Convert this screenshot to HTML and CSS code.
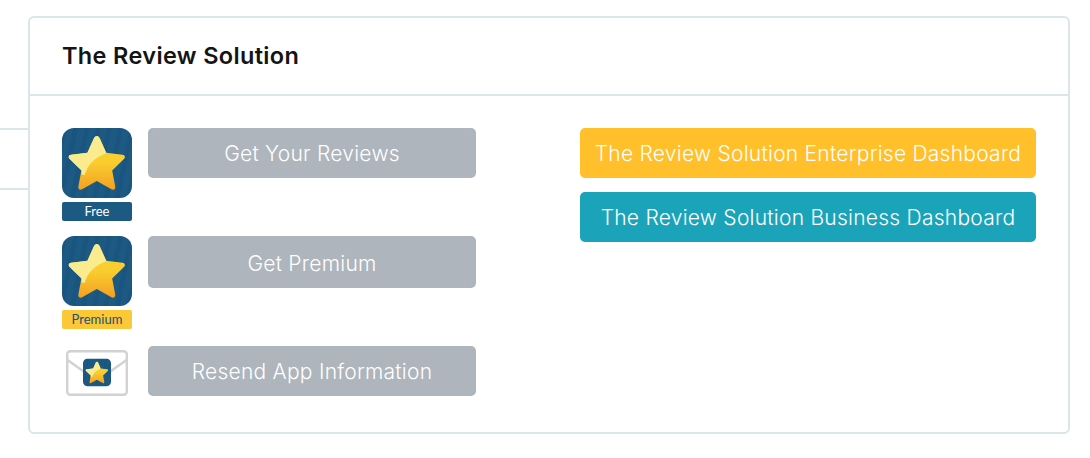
FILE: index.html
```html
<!DOCTYPE html>
<html lang="en">
<head>
<meta charset="utf-8">
<title>The Review Solution</title>
<link rel="stylesheet" href="styles.css">
</head>
<body>
<svg class="defs" width="0" height="0" aria-hidden="true">
  <defs>
    <linearGradient id="starFill" x1="0" y1="0" x2="0" y2="1">
      <stop offset="0" stop-color="#f9d233"/>
      <stop offset="0.5" stop-color="#f9cd2e"/>
      <stop offset="1" stop-color="#f3a024"/>
    </linearGradient>
    <pattern id="stripes" width="11" height="70" patternUnits="userSpaceOnUse" patternTransform="rotate(12)">
      <rect width="11" height="70" fill="#1c5a84"/>
      <rect width="5" height="70" fill="#1a5580"/>
    </pattern>
    <symbol id="appIcon" viewBox="0 0 70 70">
      <rect width="70" height="70" rx="12" fill="url(#stripes)"/>
      <path d="M34.800 8c1.400 0 2.300 1 3 2.400l6.400 14.400 16.300 2c2.500.3 3.200 2.600 1.400 4.300L50.200 42.600l3 15.800c.5 2.700-1.600 4-3.800 2.800L34.800 53l-14.600 8.200c-2.200 1.200-4.300-.1-3.800-2.800l3-15.800L7.700 31.100c-1.800-1.700-1.100-4 1.400-4.300l16.300-2 6.400-14.400c.7-1.400 1.600-2.400 3-2.400z" fill="url(#starFill)"/>
      <path d="M34.800 8c1.400 0 2.300 1 3 2.400l6.400 14.400.6.100C33 29 26 36 22.500 47l-3-.5.100-3.900L7.700 31.100c-1.800-1.700-1.100-4 1.400-4.300l16.300-2 6.400-14.400c.7-1.400 1.600-2.400 3-2.400z" fill="#faec8e"/>
    </symbol>
  </defs>
</svg>
<div class="page">
  <div class="stub"></div>
  <section class="card">
    <header class="card-head">
      <h2 class="card-title">The Review Solution</h2>
    </header>
    <div class="card-body">
      <div class="left-col">
        <div class="row row-free">
          <div class="app">
            <svg class="app-icon"><use href="#appIcon"/></svg>
            <span class="tag tag-free">Free</span>
          </div>
          <a class="btn btn-grey btn-50">Get Your Reviews</a>
        </div>
        <div class="row row-premium">
          <div class="app">
            <svg class="app-icon"><use href="#appIcon"/></svg>
            <span class="tag tag-premium">Premium</span>
          </div>
          <a class="btn btn-grey btn-52">Get Premium</a>
        </div>
        <div class="row">
          <div class="app app-mail">
            <svg class="mail" viewBox="0 0 62 46">
              <rect x="1.200" y="1.200" width="59.600" height="43.600" rx="3" fill="#fff" stroke="#d2d2d2" stroke-width="2.400"/>
              <path d="M1.500 10 L31 31 L60.500 10" fill="none" stroke="#d2d2d2" stroke-width="2.400"/>
              <svg x="17" y="8.500" width="28" height="28" viewBox="0 0 70 70"><use href="#appIcon" width="70" height="70"/></svg>
            </svg>
          </div>
          <a class="btn btn-grey btn-50">Resend App Information</a>
        </div>
      </div>
      <div class="right-col">
        <a class="btn btn-50 btn-amber">The Review Solution Enterprise Dashboard</a>
        <a class="btn btn-50 btn-teal">The Review Solution Business Dashboard</a>
      </div>
    </div>
  </section>
</div>
</body>
</html>
```
FILE: styles.css
```css
* { box-sizing: border-box; }
html, body { margin: 0; padding: 0; background: #fff; }
body { font-family: "Inter", "Liberation Sans", sans-serif; width: 1090px; height: 458px; overflow: hidden; }
.defs { display: block; height: 0; }
.page { display: flex; align-items: flex-start; padding-top: 16px; }
.stub {
  width: 28px;
  height: 62px;
  margin-top: 112px;
  border-top: 2px solid #dbe5ea;
  border-bottom: 2px solid #dbe5ea;
}
.card {
  width: 1042px;
  height: 418px;
  border: 2px solid #dbe5ea;
  border-radius: 6px;
}
.card-head {
  height: 78px;
  border-bottom: 2px solid #dbe5ea;
  display: flex;
  align-items: center;
  padding: 0 0 2px 32px;
}
.card-title {
  margin: 0;
  font-size: 23.500px;
  font-weight: 600;
  color: #141414;
  letter-spacing: 0.35px;
}
.card-body {
  display: flex;
  padding: 32px 32px 0 32px;
}
.left-col { width: 414px; display: flex; flex-direction: column; }
.right-col {
  width: 456px;
  margin-left: 104px;
  display: flex;
  flex-direction: column;
  gap: 14px;
}
.row { display: flex; align-items: flex-start; gap: 16px; }
.row-free { height: 108px; }
.row-premium { height: 110px; }
.app { width: 70px; display: flex; flex-direction: column; align-items: center; }
.app-icon { width: 70px; height: 70px; display: block; }
.tag {
  width: 70px;
  height: 19px;
  margin-top: 4px;
  border-radius: 2px;
  font-family: "Lato", "Liberation Sans", sans-serif;
  font-size: 13px;
  line-height: 19px;
  text-align: center;
}
.tag-free { background: #1c5a84; color: #fff; }
.tag-premium { background: #fbc838; color: #1c5078; }
.app-mail { padding-top: 4px; }
.mail { width: 62px; height: 46px; display: block; }
.btn {
  display: flex;
  align-items: center;
  justify-content: center;
  border-radius: 5px;
  color: #fff;
  font-size: 21px;
  font-weight: 300;
  letter-spacing: 0.25px;
}
.btn-50 { height: 50px; }
.btn-52 { height: 52px; padding-top: 2px; }
.btn-grey { width: 328px; background: #aeb5bc; }
.btn-amber { background: #ffc02b; }
.btn-teal { background: #1ba4b9; }
```
